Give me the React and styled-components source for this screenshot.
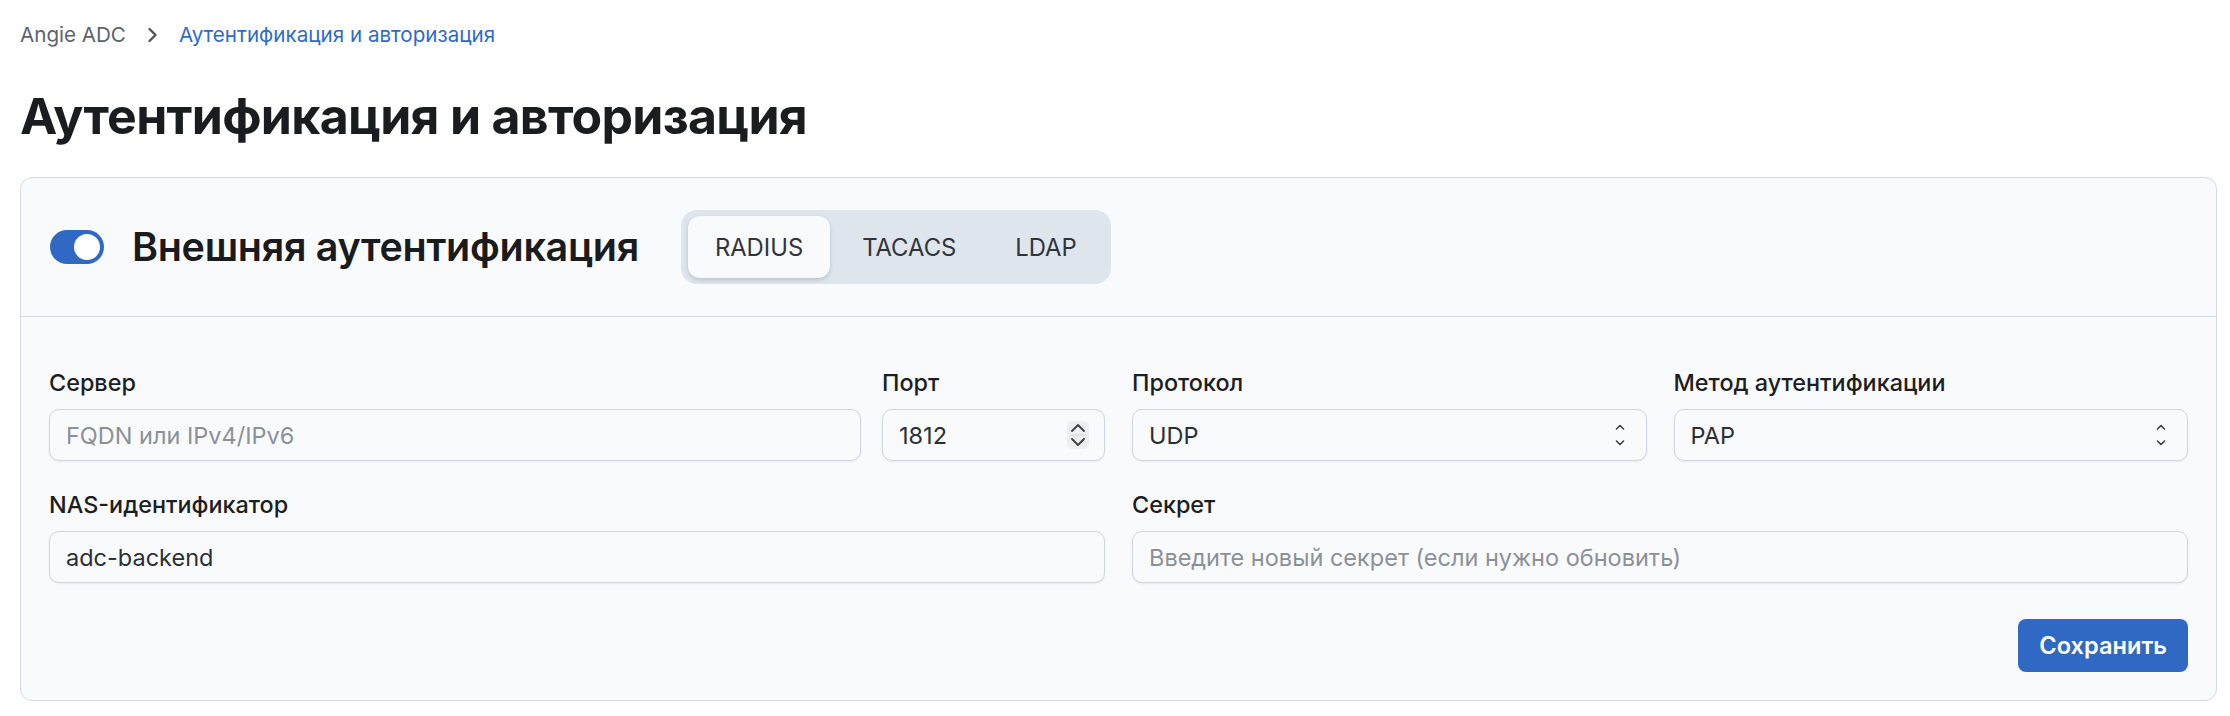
import React, {useState} from 'react';
import styled, {createGlobalStyle} from 'styled-components';

const GlobalStyle = createGlobalStyle`
    body {
        margin: 0;
        background: #ffffff;
        font-family: Inter, "Noto Sans", sans-serif;
        color: #1b1d21;
    }
    * { box-sizing: border-box; }
`

const Page = styled.div`
    padding: 21px 13px 16px 20px;
`

const Crumbs = styled.nav`
    display: flex;
    align-items: center;
    gap: 21px;
    font-size: 20.6px;
    line-height: 28px;
    color: #5d636c;
`

const CrumbLink = styled.span`
    color: ${props => (props.active ? '#2f6bc6' : '#5d636c')};
`

const Title = styled.h1`
    margin: 36px 0 30px;
    font-size: 50px;
    line-height: 62px;
    font-weight: 700;
    letter-spacing: -0.7px;
    color: #1b1c1f;
`

const Card = styled.section`
    background: #f9fafc;
    border: 1.5px solid #d3dae3;
    border-radius: 12px;
`

const CardHeader = styled.header`
    display: flex;
    align-items: center;
    padding: 32px 29px;
    border-bottom: 1.5px solid #d9dee5;
`

const Toggle = styled.button`
    width: 54px;
    height: 34px;
    padding: 4px;
    border: none;
    border-radius: 17px;
    background: ${props => (props.on ? '#2f69c4' : '#c4ccd6')};
    display: flex;
    justify-content: ${props => (props.on ? 'flex-end' : 'flex-start')};
    cursor: pointer;
    margin-right: 28px;

    &::after {
        content: '';
        width: 26px;
        height: 26px;
        border-radius: 50%;
        background: #ffffff;
    }
`

const HeaderTitle = styled.h2`
    margin: 0 42px 0 0;
    font-size: 39.5px;
    line-height: 48px;
    font-weight: 600;
    letter-spacing: -0.3px;
    color: #1a1b1e;
`

const Tabs = styled.div`
    display: flex;
    gap: 5px;
    padding: 6px 7px;
    background: #dfe5ec;
    border-radius: 16px;
`

const Tab = styled.button`
    height: 62px;
    padding: 0 27px;
    border: none;
    border-radius: 12px;
    font-family: inherit;
    font-size: 23.8px;
    color: #30353b;
    background: ${props => (props.active ? '#f9fafb' : 'transparent')};
    box-shadow: ${props => (props.active ? '0 2px 4px rgba(30, 40, 60, 0.18)' : 'none')};
    cursor: pointer;
`

const CardBody = styled.div`
    padding: 50px 28px 28px;
    display: flex;
    flex-direction: column;
    gap: 28px;
`

const Row = styled.div`
    display: grid;
    grid-template-columns: 1fr 1fr;
    column-gap: 27px;
`

const Half = styled.div`
    display: grid;
    grid-template-columns: ${props => props.cols || '1fr'};
    column-gap: ${props => props.gap || 27}px;
`

const Field = styled.label`
    display: flex;
    flex-direction: column;
    gap: 10px;
`

const Label = styled.span`
    font-size: 23.4px;
    line-height: 32px;
    font-weight: 500;
    color: #1c1e22;
`

const boxStyles = `
    height: 52px;
    width: 100%;
    border: 1.5px solid #cfd6e0;
    border-radius: 10px;
    background: #f9fafc;
    box-shadow: 0 1px 2px rgba(30, 40, 60, 0.08);
    font-family: Inter, "Noto Sans", sans-serif;
    font-size: 23.5px;
    color: #2b2f35;
`

const TextInput = styled.input`
    ${boxStyles}
    padding: 0 16px;
    outline: none;

    &::placeholder {
        color: #8b9199;
    }
`

const Box = styled.div`
    ${boxStyles}
    display: flex;
    align-items: center;
    justify-content: space-between;
    padding: 0 ${props => props.pr || 20}px 0 16px;
`

const Spinner = styled.span`
    width: 22px;
    height: 28px;
    border-radius: 5px;
    background: #eceef1;
    display: flex;
    align-items: center;
    justify-content: center;
`

const Footer = styled.div`
    display: flex;
    justify-content: flex-end;
    margin-top: 8px;
`

const SaveButton = styled.button`
    height: 53px;
    padding: 0 21px;
    border: none;
    border-radius: 8px;
    background: #2f69c4;
    color: #ffffff;
    font-family: inherit;
    font-size: 23.6px;
    font-weight: 600;
    cursor: pointer;
`

const Chevron = () => (
    <svg width="22" height="28" viewBox="0 0 22 28" fill="none">
        <path d="M5 10 L11 4 L17 10" stroke="#3a3f45" strokeWidth="1.8" strokeLinecap="round" strokeLinejoin="round" />
        <path d="M3 14 H19" stroke="#d3d7dc" strokeWidth="1" />
        <path d="M5 18 L11 24 L17 18" stroke="#3a3f45" strokeWidth="1.8" strokeLinecap="round" strokeLinejoin="round" />
    </svg>
)

const UpDown = () => (
    <svg width="12" height="24" viewBox="0 0 12 24" fill="none">
        <path d="M2.5 6 L6 2.5 L9.5 6" stroke="#3a3f45" strokeWidth="1.6" strokeLinecap="round" strokeLinejoin="round" />
        <path d="M2.5 18 L6 21.5 L9.5 18" stroke="#3a3f45" strokeWidth="1.6" strokeLinecap="round" strokeLinejoin="round" />
    </svg>
)

const Select = ({value}) => (
    <Box>
        <span>{value}</span>
        <UpDown />
    </Box>
)

const tabs = ['RADIUS', 'TACACS', 'LDAP']

export default function App() {
    const [enabled, setEnabled] = useState(true)
    const [tab, setTab] = useState('RADIUS')

    return (
        <Page>
            <GlobalStyle />
            <Crumbs>
                <CrumbLink>Angie ADC</CrumbLink>
                <svg width="11" height="16" viewBox="0 0 11 16" fill="none">
                    <path d="M2.5 2 L8.5 8 L2.5 14" stroke="#4f555d" strokeWidth="2.4" strokeLinecap="round" strokeLinejoin="round" />
                </svg>
                <CrumbLink active>Аутентификация и авторизация</CrumbLink>
            </Crumbs>
            <Title>Аутентификация и авторизация</Title>

            <Card>
                <CardHeader>
                    <Toggle on={enabled ? 1 : 0} onClick={() => setEnabled(!enabled)} />
                    <HeaderTitle>Внешняя аутентификация</HeaderTitle>
                    <Tabs>
                        {tabs.map(t => (
                            <Tab key={t} active={t === tab ? 1 : 0} onClick={() => setTab(t)}>{t}</Tab>
                        ))}
                    </Tabs>
                </CardHeader>

                <CardBody>
                    <Row>
                        <Half cols="1fr 223px" gap={21}>
                            <Field>
                                <Label>Сервер</Label>
                                <TextInput placeholder="FQDN или IPv4/IPv6" />
                            </Field>
                            <Field>
                                <Label>Порт</Label>
                                <Box pr={15}>
                                    <span>1812</span>
                                    <Spinner><Chevron /></Spinner>
                                </Box>
                            </Field>
                        </Half>
                        <Half cols="1fr 1fr">
                            <Field>
                                <Label>Протокол</Label>
                                <Select value="UDP" />
                            </Field>
                            <Field>
                                <Label>Метод аутентификации</Label>
                                <Select value="PAP" />
                            </Field>
                        </Half>
                    </Row>
                    <Row>
                        <Field>
                            <Label>NAS-идентификатор</Label>
                            <TextInput defaultValue="adc-backend" />
                        </Field>
                        <Field>
                            <Label>Секрет</Label>
                            <TextInput placeholder="Введите новый секрет (если нужно обновить)" />
                        </Field>
                    </Row>
                    <Footer>
                        <SaveButton>Сохранить</SaveButton>
                    </Footer>
                </CardBody>
            </Card>
        </Page>
    )
}
